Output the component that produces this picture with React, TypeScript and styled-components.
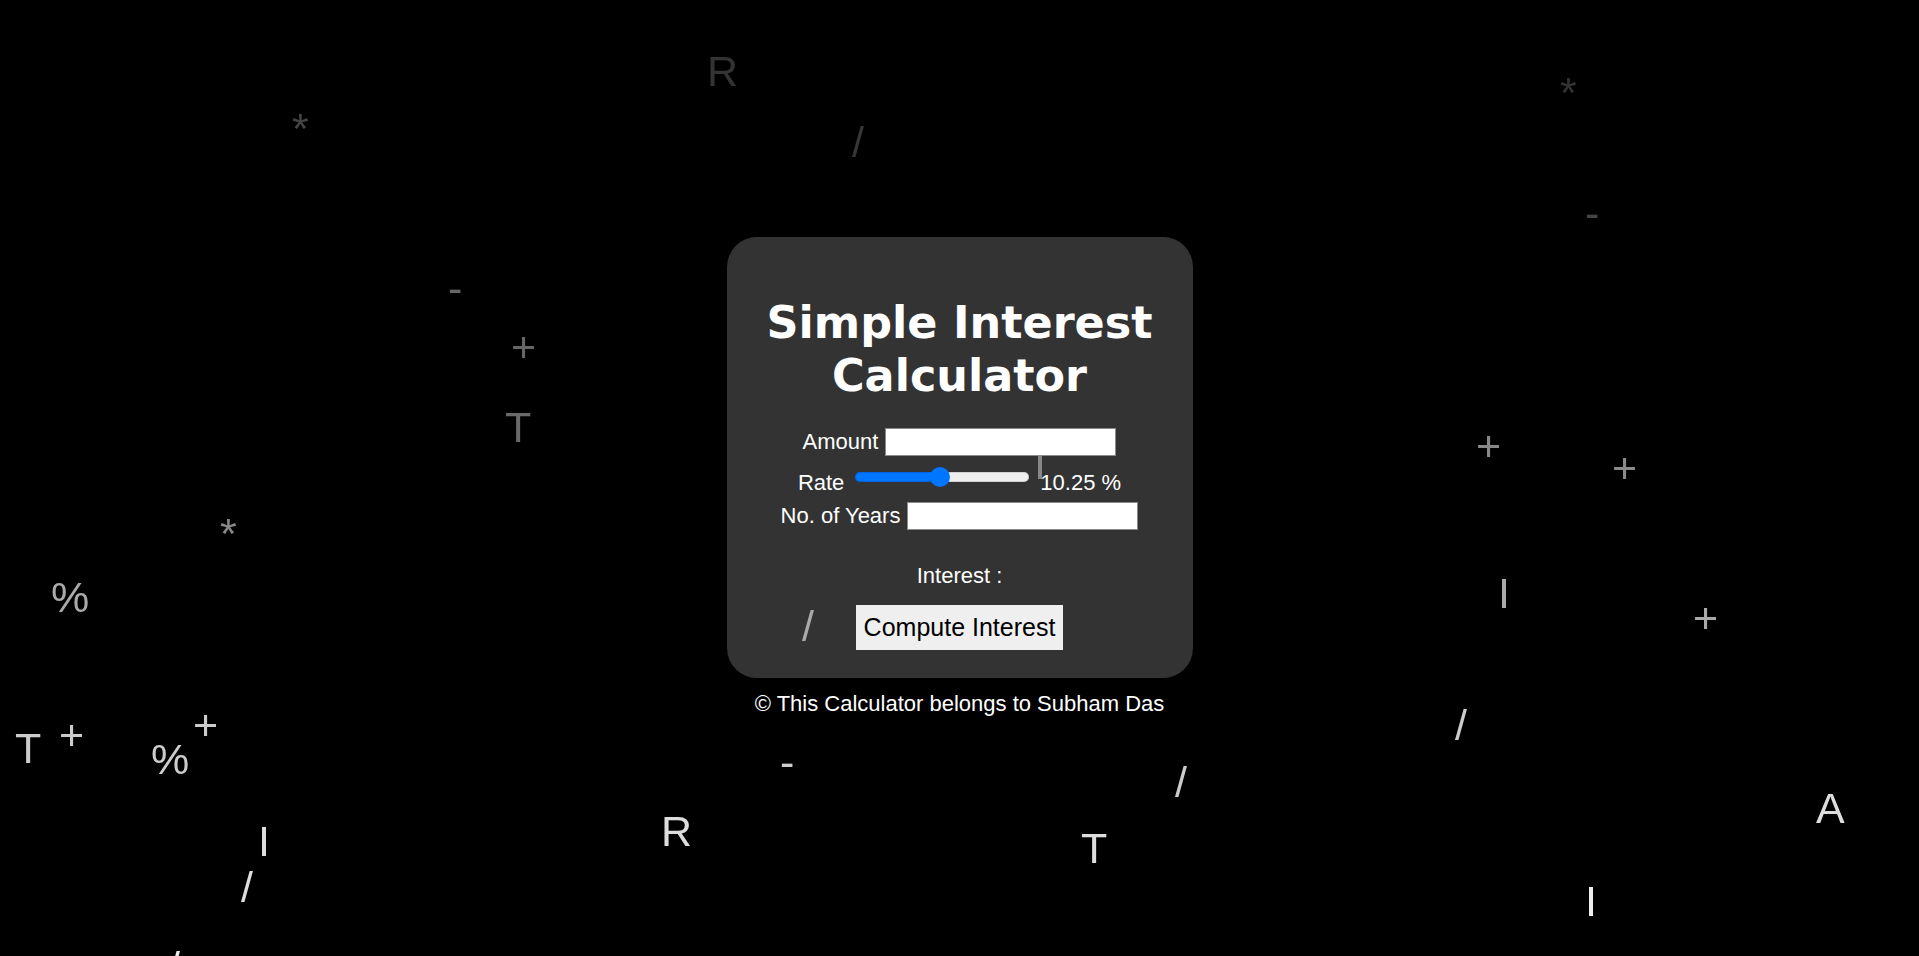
import { useState } from 'react'
import styled, { createGlobalStyle } from 'styled-components'

const GlobalStyle = createGlobalStyle`
  html, body {
    margin: 0;
    padding: 0;
    background: #000;
    overflow: hidden;
  }
  body {
    font-family: "Liberation Sans", Arial, sans-serif;
  }
`

// falling symbols in the background, placed where they sit in the frame
const symbols = [
  { ch: 'R', x: 707, y: 50, c: '#333' },
  { ch: '/', x: 852, y: 121, c: '#363636' },
  { ch: '*', x: 292, y: 107, c: '#444' },
  { ch: '*', x: 1560, y: 71, c: '#333' },
  { ch: '-', x: 1585, y: 192, c: '#444' },
  { ch: '-', x: 448, y: 267, c: '#666' },
  { ch: '+', x: 511, y: 326, c: '#666' },
  { ch: 'T', x: 505, y: 406, c: '#6a6a6a' },
  { ch: '*', x: 220, y: 512, c: '#888' },
  { ch: '%', x: 51, y: 576, c: '#aaa' },
  { ch: '+', x: 1476, y: 425, c: '#888' },
  { ch: '+', x: 1612, y: 447, c: '#8a8a8a' },
  { ch: 'I', x: 1498, y: 572, c: '#aaa' },
  { ch: '+', x: 1693, y: 597, c: '#aaa' },
  { ch: '/', x: 802, y: 605, c: '#aaa' },
  { ch: 'I', x: 1034, y: 443, c: '#888' },
  { ch: 'T', x: 15, y: 727, c: '#ccc' },
  { ch: '+', x: 59, y: 714, c: '#ccc' },
  { ch: '%', x: 151, y: 738, c: '#ccc' },
  { ch: '+', x: 193, y: 704, c: '#ccc' },
  { ch: 'I', x: 258, y: 820, c: '#ddd' },
  { ch: '/', x: 241, y: 866, c: '#ddd' },
  { ch: 'R', x: 661, y: 810, c: '#ddd' },
  { ch: '-', x: 780, y: 741, c: '#ccc' },
  { ch: '/', x: 1175, y: 761, c: '#ccc' },
  { ch: 'T', x: 1081, y: 827, c: '#ddd' },
  { ch: '/', x: 1455, y: 704, c: '#ccc' },
  { ch: 'A', x: 1816, y: 787, c: '#ddd' },
  { ch: 'I', x: 1585, y: 880, c: '#eee' },
  { ch: '/', x: 168, y: 946, c: '#eee' },
]

const RATE_MIN = 1
const RATE_MAX = 20
const SLIDER_W = 174
const THUMB = 20

export default function App() {
  const [rate, setRate] = useState(10.25)
  const [amount, setAmount] = useState('')
  const [years, setYears] = useState('')
  const [result, setResult] = useState('')

  const p = (rate - RATE_MIN) / (RATE_MAX - RATE_MIN)
  const fill = ((THUMB / 2 + p * (SLIDER_W - THUMB)) / SLIDER_W) * 100

  const compute = () => {
    const a = parseFloat(amount)
    const y = parseFloat(years)
    if (isNaN(a) || isNaN(y)) return
    setResult(((a * rate * y) / 100).toFixed(2))
  }

  return (
    <>
      <GlobalStyle />
      <Rain>
        {symbols.map((s, i) => (
          <Symbol key={i} $color={s.c} style={{ left: s.x, top: s.y }}>
            {s.ch}
          </Symbol>
        ))}
      </Rain>
      <Page>
        <Card>
          <Title>
            Simple Interest
            <br />
            Calculator
          </Title>
          <Row>
            <Label>Amount</Label>
            <Field type="number" value={amount} onChange={e => setAmount(e.target.value)} />
          </Row>
          <RateRow>
            <Label>Rate</Label>
            <Slider
              type="range"
              min={RATE_MIN}
              max={RATE_MAX}
              step={0.25}
              value={rate}
              onChange={e => setRate(parseFloat(e.target.value))}
              style={{ ['--fill' as string]: `${fill}%` }}
            />
            <Label>{rate.toFixed(2)} %</Label>
          </RateRow>
          <Row>
            <Label>No. of Years</Label>
            <Field type="number" value={years} onChange={e => setYears(e.target.value)} />
          </Row>
          <Result>Interest : {result}</Result>
          <Button onClick={compute}>Compute Interest</Button>
        </Card>
        <Footer>© This Calculator belongs to Subham Das</Footer>
      </Page>
    </>
  )
}

const Rain = styled.div`
  position: fixed;
  inset: 0;
  z-index: 1;
  overflow: hidden;
  pointer-events: none;
`
const Symbol = styled.span<{ $color: string }>`
  position: absolute;
  font-family: "Liberation Sans", Arial, sans-serif;
  font-size: 43px;
  line-height: 1;
  color: ${p => p.$color};
`
const Page = styled.div`
  min-height: 100vh;
  box-sizing: border-box;
  padding-bottom: 2.5px;
  display: flex;
  flex-direction: column;
  align-items: center;
  justify-content: center;
`
const Card = styled.div`
  width: 466px;
  box-sizing: border-box;
  padding: 59px 20px 28px;
  background: #333;
  border-radius: 30px;
  color: #fff;
  display: flex;
  flex-direction: column;
  align-items: center;
`
const Title = styled.h1`
  margin: 0 0 26.5px;
  font-family: "DejaVu Sans", Verdana, sans-serif;
  font-size: 44.5px;
  line-height: 53px;
  font-weight: bold;
  text-align: center;
  color: #fff;
`
const Row = styled.div`
  display: flex;
  align-items: center;
  gap: 7px;
  height: 28px;
`
const Label = styled.span`
  font-size: 22px;
  color: #fff;
  white-space: nowrap;
`
const RateRow = styled(Row)`
  gap: 9px;
  height: 46px;
  ${Label} {
    margin-top: 7px;
  }
`
const Field = styled.input`
  position: relative;
  z-index: 2;
  width: 231px;
  height: 28px;
  box-sizing: border-box;
  border: 1px solid #8a8a8a;
  background: #fff;
  padding: 0 4px;
  font-size: 16px;
  font-family: inherit;
  outline: none;
  &::-webkit-outer-spin-button,
  &::-webkit-inner-spin-button {
    -webkit-appearance: none;
    margin: 0;
  }
`
const Slider = styled.input`
  position: relative;
  z-index: 2;
  -webkit-appearance: none;
  appearance: none;
  width: ${SLIDER_W}px;
  height: ${THUMB}px;
  margin: 0 2px 4px;
  background: transparent;
  &::-webkit-slider-runnable-track {
    height: 10px;
    border-radius: 5px;
    background: linear-gradient(to right, #0075ff var(--fill), #efefef var(--fill));
    box-shadow: inset 0 0 0 1px rgba(0, 0, 0, 0.12);
  }
  &::-webkit-slider-thumb {
    -webkit-appearance: none;
    width: ${THUMB}px;
    height: ${THUMB}px;
    margin-top: -5px;
    border-radius: 50%;
    background: #0075ff;
    border: none;
  }
`
const Result = styled.p`
  margin: 33px 0 0;
  font-size: 22px;
  color: #fff;
`
const Button = styled.button`
  position: relative;
  z-index: 2;
  margin-top: 16px;
  padding: 8px 8px;
  border: none;
  background: #efefef;
  color: #000;
  font-family: "Liberation Sans", Arial, sans-serif;
  font-size: 25px;
  cursor: pointer;
`
const Footer = styled.p`
  margin: 13px 0 0;
  font-size: 22px;
  color: #fff;
`
